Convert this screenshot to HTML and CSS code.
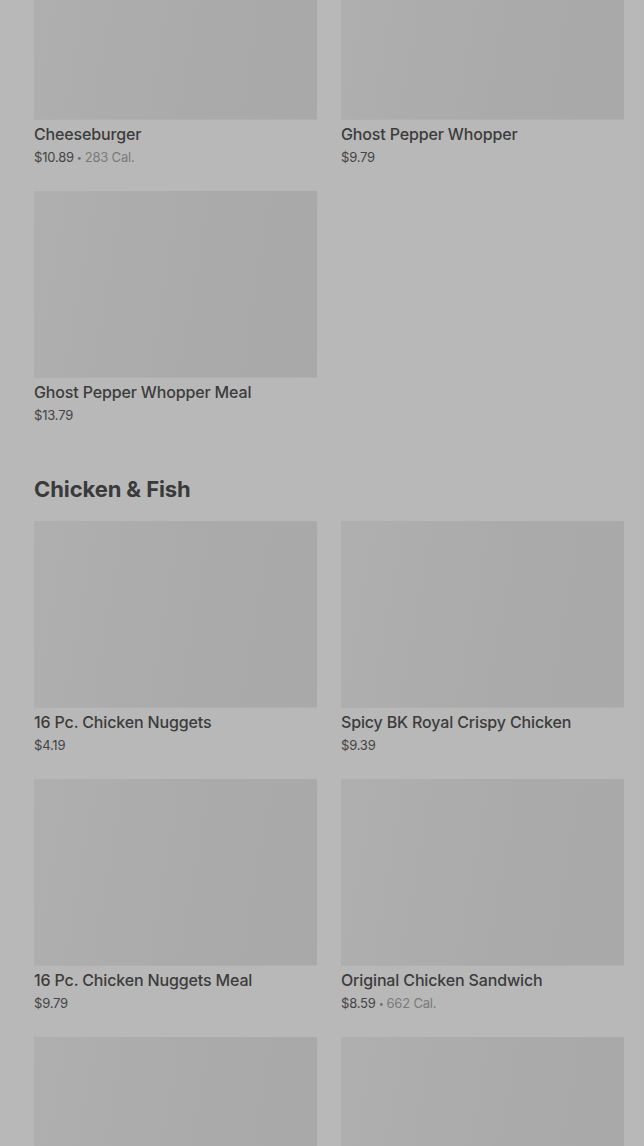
FILE: index.html
```html
<!DOCTYPE html>
<html>
<head>
<meta charset="utf-8">
<link rel="stylesheet" href="styles.css">
</head>
<body>
<main class="menu">
  <section class="section first">
    <div class="grid">
      <div class="card"><div class="thumb"></div><div class="name">Cheeseburger</div><div class="meta"><span class="price">$10.89</span><span class="dot">•</span><span class="cal">283 Cal.</span></div></div>
      <div class="card"><div class="thumb"></div><div class="name">Ghost Pepper Whopper</div><div class="meta"><span class="price">$9.79</span></div></div>
      <div class="card"><div class="thumb"></div><div class="name">Ghost Pepper Whopper Meal</div><div class="meta"><span class="price">$13.79</span></div></div>
    </div>
  </section>
  <section class="section">
    <h2 class="heading">Chicken &amp; Fish</h2>
    <div class="grid">
      <div class="card"><div class="thumb"></div><div class="name">16 Pc. Chicken Nuggets</div><div class="meta"><span class="price">$4.19</span></div></div>
      <div class="card"><div class="thumb"></div><div class="name">Spicy BK Royal Crispy Chicken</div><div class="meta"><span class="price">$9.39</span></div></div>
      <div class="card"><div class="thumb"></div><div class="name">16 Pc. Chicken Nuggets Meal</div><div class="meta"><span class="price">$9.79</span></div></div>
      <div class="card"><div class="thumb"></div><div class="name">Original Chicken Sandwich</div><div class="meta"><span class="price">$8.59</span><span class="dot">•</span><span class="cal">662 Cal.</span></div></div>
      <div class="card"><div class="thumb"></div><div class="name">&nbsp;</div><div class="meta">&nbsp;</div></div>
      <div class="card"><div class="thumb"></div><div class="name">&nbsp;</div><div class="meta">&nbsp;</div></div>
    </div>
  </section>
</main>
</body>
</html>
```
FILE: styles.css
```css
html, body {
  margin: 0;
  padding: 0;
  background: #b8b8b8;
  height: 1146px;
  overflow: hidden;
}
body {
  font-family: Inter, "Noto Sans", sans-serif;
  color: #3b3b3b;
}
.menu {
  padding: 0 20px 0 34px;
  margin-top: -67px;
}
.section + .section {
  margin-top: 51px;
}
.heading {
  margin: 0 0 18px;
  font-size: 22px;
  line-height: 28px;
  font-weight: 700;
  letter-spacing: -0.1px;
  color: #3a3a3a;
}
.grid {
  display: grid;
  grid-template-columns: 283px 283px;
  column-gap: 24px;
  row-gap: 25px;
}
.thumb {
  height: 187px;
  background: linear-gradient(100deg, #afafaf 0%, #aaaaaa 60%, #a9a9a9 100%);
  border-bottom: 1px solid #b0b0b0;
  box-sizing: border-box;
}
.name {
  margin-top: 4px;
  font-size: 16px;
  line-height: 20px;
  font-weight: 500;
  letter-spacing: -0.15px;
  color: #3c3c3c;
  white-space: nowrap;
}
.meta {
  margin-top: 4px;
  height: 18px;
  font-size: 13px;
  line-height: 18px;
  color: #444;
  letter-spacing: -0.2px;
}
.dot {
  margin: 0 3px;
  color: #6f6f6f;
  font-size: 9px;
  line-height: 0;
  vertical-align: 1px;
}
.cal {
  color: #7a7a7a;
}
```
